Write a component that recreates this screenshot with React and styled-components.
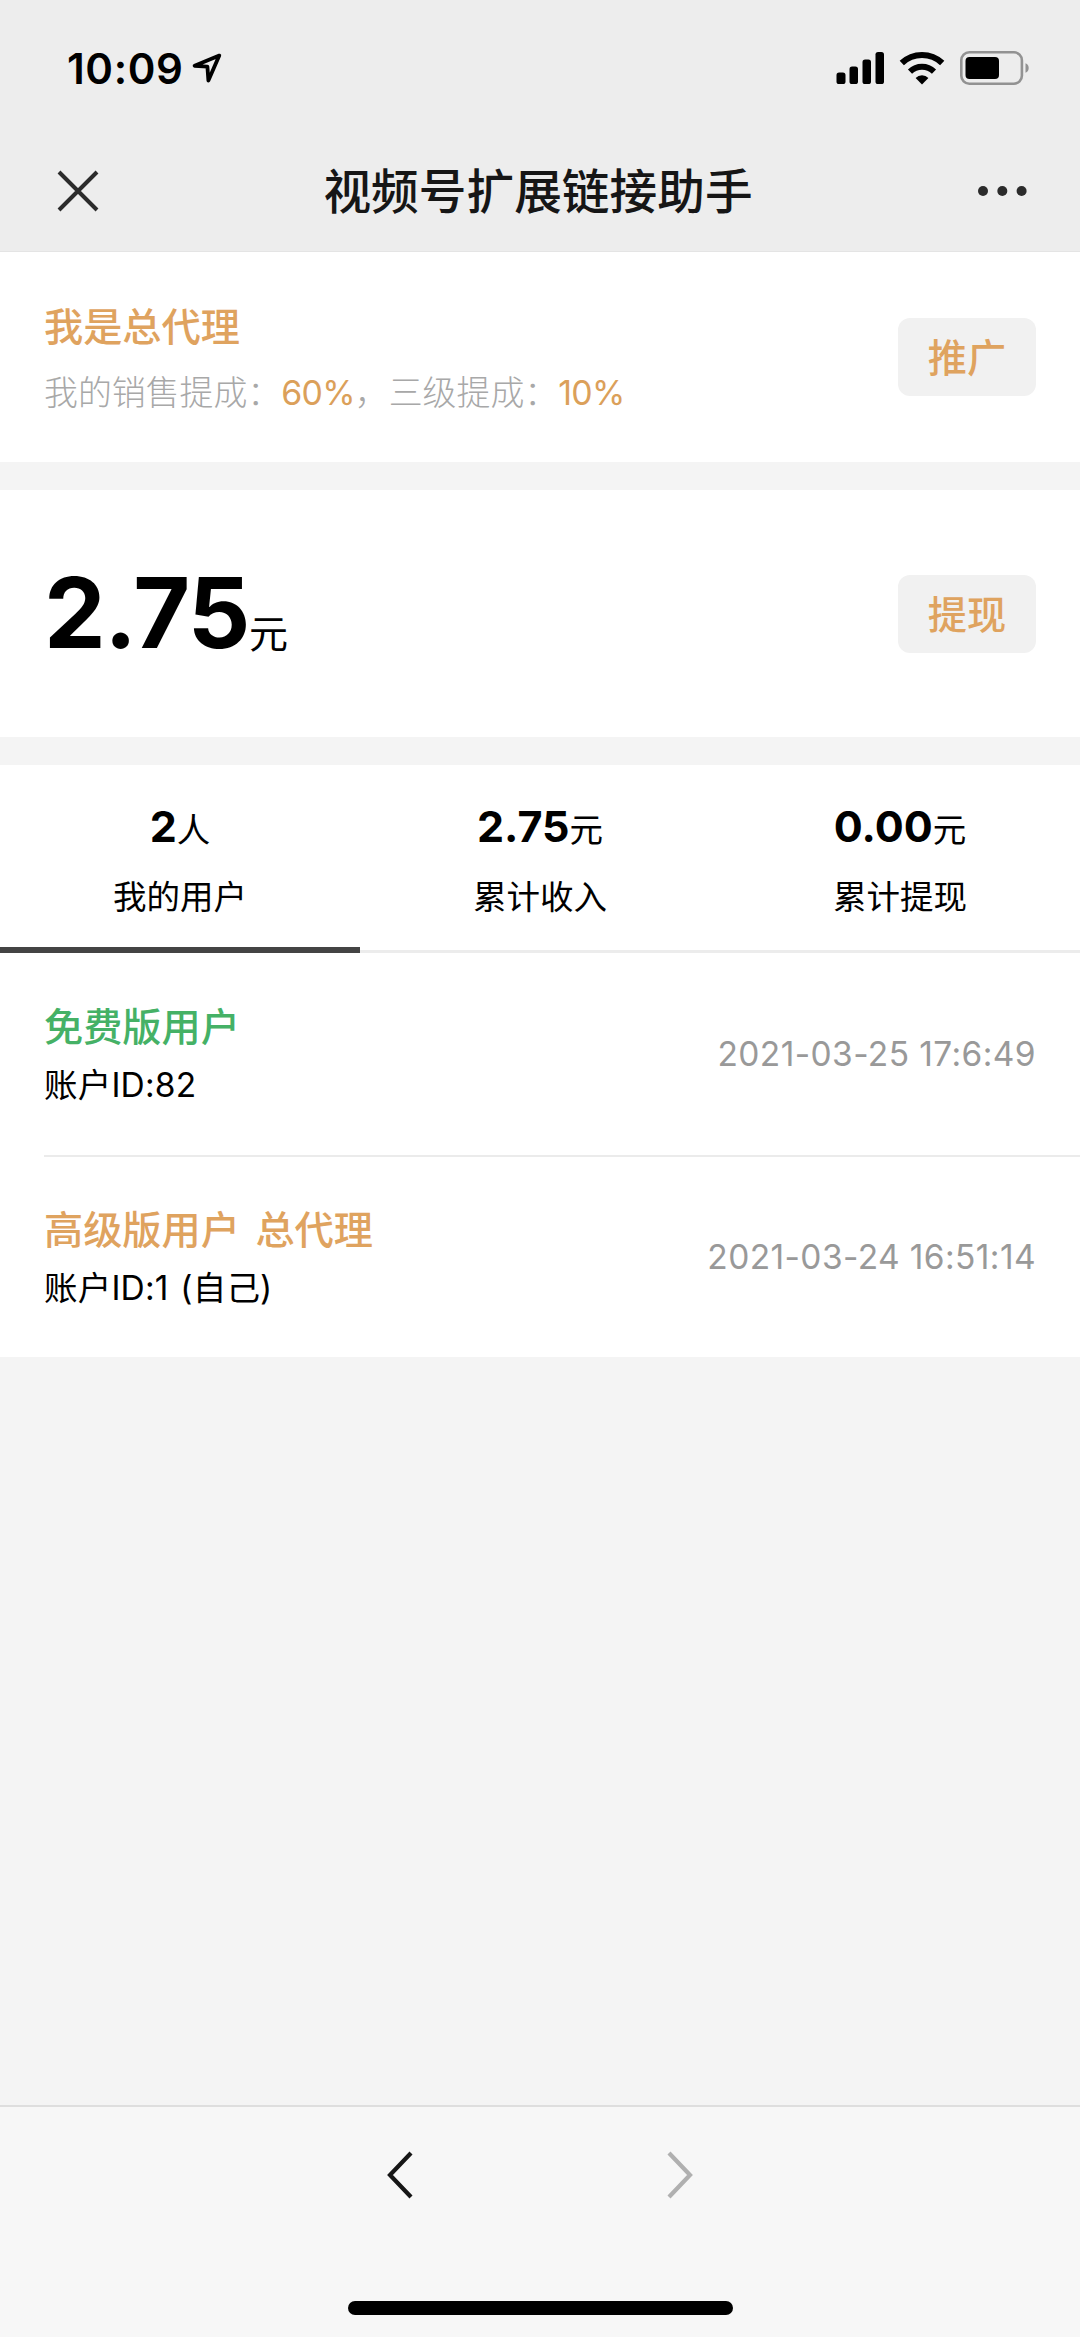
import { useState } from "react";
import styled, { createGlobalStyle } from "styled-components";

const tabs = [
  { value: "2", unit: "人", label: "我的用户" },
  { value: "2.75", unit: "元", label: "累计收入" },
  { value: "0.00", unit: "元", label: "累计提现" },
];

const users = [
  { name: "免费版用户", account: "账户ID:82", time: "2021-03-25 17:6:49", color: "#45b166" },
  { name: "高级版用户 总代理", account: "账户ID:1 (自己)", time: "2021-03-24 16:51:14", color: "#dfa35f" },
];

export default function App() {
  const [active, setActive] = useState(0);

  return (
    <Page>
      <GlobalStyle />
      <StatusBar>
        <Time>10:09</Time>
        <LocationIcon />
        <StatusIcons />
      </StatusBar>
      <NavBar>
        <svg width="42" height="42" viewBox="0 0 42 42">
          <path d="M2 2L40 40M40 2L2 40" stroke="#2b2b2b" strokeWidth="4" />
        </svg>
        <Title>视频号扩展链接助手</Title>
        <svg width="50" height="12" viewBox="0 0 50 12" fill="#2b2b2b">
          <circle cx="6" cy="6" r="5" />
          <circle cx="25.3" cy="6" r="5" />
          <circle cx="44.6" cy="6" r="5" />
        </svg>
      </NavBar>

      <Section $height={210}>
        <Agent>
          <Role>我是总代理</Role>
          <Rates>
            我的销售提成：<Rate>60%</Rate>，三级提成：<Rate>10%</Rate>
          </Rates>
        </Agent>
        <Button>推广</Button>
      </Section>

      <Section $height={247}>
        <Balance>
          2.75<BalanceUnit>元</BalanceUnit>
        </Balance>
        <Button>提现</Button>
      </Section>

      <Tabs>
        {tabs.map((tab, index) => (
          <Tab key={tab.label} $active={index === active} onClick={() => setActive(index)}>
            <TabValue>
              {tab.value}
              <TabUnit>{tab.unit}</TabUnit>
            </TabValue>
            <TabLabel>{tab.label}</TabLabel>
          </Tab>
        ))}
      </Tabs>

      <List>
        {users.map((user) => (
          <Row key={user.account}>
            <UserInfo>
              <UserName $color={user.color}>{user.name}</UserName>
              <Account>{user.account}</Account>
            </UserInfo>
            <JoinTime>{user.time}</JoinTime>
          </Row>
        ))}
      </List>

      <BottomBar>
        <Arrows>
          <svg width="26" height="48" viewBox="0 0 26 48" fill="none">
            <path d="M24 2L3 24L24 46" stroke="#161616" strokeWidth="4.2" />
          </svg>
          <svg width="26" height="48" viewBox="0 0 26 48" fill="none">
            <path d="M2 2L23 24L2 46" stroke="#b0b0b0" strokeWidth="4.2" />
          </svg>
        </Arrows>
        <HomeIndicator />
      </BottomBar>
    </Page>
  );
}

function LocationIcon() {
  return (
    <svg width="30" height="31" viewBox="0 0 30 31" fill="none">
      <path
        d="M27.3 2.6L2.6 12.8L15.4 13.6L16.4 27.6Z"
        stroke="#000"
        strokeWidth="3.8"
        strokeLinejoin="round"
      />
    </svg>
  );
}

function StatusIcons() {
  return (
    <Icons>
      <svg width="48" height="34" viewBox="0 0 48 34">
        <rect x="0.5" y="21.5" width="9" height="11.5" rx="2.6" />
        <rect x="13.5" y="15.5" width="8.5" height="17.5" rx="2.6" />
        <rect x="26.5" y="8.5" width="8.5" height="24.5" rx="2.6" />
        <rect x="39.5" y="1" width="8.5" height="32" rx="2.6" />
      </svg>
      <svg width="46" height="34" viewBox="0 0 46 34" fill="none">
        <path d="M2.8 12a29.5 29.5 0 0 1 40.4 0" stroke="#000" strokeWidth="6.2" />
        <path d="M11 20.6a17.5 17.5 0 0 1 24 0" stroke="#000" strokeWidth="6" />
        <path d="M23 33.5L16.6 27a9 9 0 0 1 12.8 0Z" fill="#000" />
      </svg>
      <svg width="70" height="34" viewBox="0 0 70 34" fill="none">
        <rect x="1.3" y="1.3" width="60.6" height="31.4" rx="8" stroke="#929292" strokeWidth="2.6" />
        <rect x="5.5" y="6" width="33.5" height="22" rx="4" fill="#000" />
        <path d="M65.5 12.2a5.2 5.2 0 0 1 0 9.6Z" fill="#929292" />
      </svg>
    </Icons>
  );
}

const GlobalStyle = createGlobalStyle`
  * {
    box-sizing: border-box;
  }

  body {
    margin: 0;
    background: #f4f4f4;
    font-family: Inter, "Noto Sans CJK SC", sans-serif;
  }
`;

const Page = styled.div`
  display: flex;
  flex-direction: column;
  width: 1080px;
  height: 2337px;
  color: #000;
`;

const StatusBar = styled.div`
  display: flex;
  align-items: center;
  height: 130px;
  padding: 6px 50px 0 67px;
  background: #ededed;
`;

const Time = styled.div`
  width: 125px;
  font-size: 42px;
  font-weight: 600;
  letter-spacing: 0.6px;
`;

const Icons = styled.div`
  display: flex;
  gap: 15px;
  margin-left: auto;
`;

const NavBar = styled.div`
  display: flex;
  align-items: center;
  justify-content: space-between;
  height: 122px;
  padding: 0 53px 0 57px;
  border-bottom: 1px solid #e4e4e4;
  background: #ededed;
`;

const Title = styled.h1`
  margin: 0;
  padding-bottom: 4px;
  font-size: 47.7px;
  font-weight: 500;
  color: #161616;
`;

const Section = styled.section`
  display: flex;
  align-items: center;
  justify-content: space-between;
  height: ${(props) => props.$height}px;
  margin-bottom: 28px;
  padding: 0 44px;
  background: #fff;
`;

const Agent = styled.div`
  padding-top: 6px;
`;

const Role = styled.div`
  font-size: 39.2px;
  font-weight: 500;
  line-height: 60px;
  color: #dfa35f;
`;

const Rates = styled.div`
  margin-top: 6px;
  font-size: 33.9px;
  font-weight: 300;
  line-height: 60px;
  color: #a8a8a8;
`;

const Rate = styled.span`
  font-weight: 400;
  letter-spacing: -0.7px;
  color: #dba05a;
`;

const Button = styled.button`
  width: 138px;
  height: 78px;
  padding: 0 0 4px;
  border: none;
  border-radius: 12px;
  background: #f1f1f1;
  font-family: inherit;
  font-size: 39.2px;
  font-weight: 500;
  color: #dfa35f;
`;

const Balance = styled.div`
  padding-top: 20px;
  font-size: 98px;
  font-weight: 700;
  line-height: 120px;
  letter-spacing: -1.4px;
`;

const BalanceUnit = styled.span`
  font-size: 39px;
  font-weight: 400;
`;

const Tabs = styled.div`
  display: flex;
  height: 188px;
  background: #fff;
`;

const Tab = styled.div`
  flex: 1;
  padding-top: 31px;
  border-bottom: ${(props) => (props.$active ? "6px solid #444" : "3px solid #ececec")};
  text-align: center;
`;

const TabValue = styled.div`
  font-size: 43px;
  font-weight: 700;
  line-height: 60px;
`;

const TabUnit = styled.span`
  font-size: 33.5px;
  font-weight: 400;
`;

const TabLabel = styled.div`
  margin-top: 7px;
  font-size: 33.5px;
  line-height: 60px;
`;

const List = styled.div`
  padding-left: 44px;
  background: #fff;
`;

const Row = styled.div`
  display: flex;
  align-items: center;
  justify-content: space-between;
  height: 202px;
  padding-right: 44px;

  & + & {
    border-top: 2px solid #ebebeb;
  }
`;

const UserInfo = styled.div`
  padding-top: 4px;
`;

const UserName = styled.div`
  font-size: 39.2px;
  font-weight: 500;
  line-height: 58px;
  word-spacing: 5px;
  color: ${(props) => props.$color};
`;

const Account = styled.div`
  font-size: 33.5px;
  line-height: 58px;
  letter-spacing: 0.2px;
  word-spacing: 2px;
`;

const JoinTime = styled.div`
  font-size: 33.5px;
  letter-spacing: 0.4px;
  color: #999;
`;

const BottomBar = styled.div`
  display: flex;
  flex-direction: column;
  align-items: center;
  justify-content: space-between;
  height: 232px;
  margin-top: auto;
  padding: 44px 0 22px;
  border-top: 2px solid #dedede;
  background: #f7f7f7;
`;

const Arrows = styled.div`
  display: flex;
  justify-content: space-between;
  width: 306px;
`;

const HomeIndicator = styled.div`
  width: 385px;
  height: 14px;
  border-radius: 7px;
  background: #000;
`;
